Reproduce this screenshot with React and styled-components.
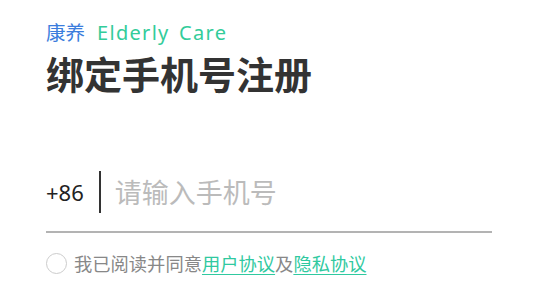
import styled, { createGlobalStyle } from 'styled-components';

const GlobalStyle = createGlobalStyle`
  body {
    margin: 0;
    background: #fff;
    font-family: "Noto Sans", "Noto Sans CJK SC", sans-serif;
  }
`

function App() {
  return (
    <>
      <GlobalStyle />
      <Page>
        <Brand>
          <BrandCn>康养</BrandCn>
          <BrandEn>Elderly Care</BrandEn>
        </Brand>
        <Title>绑定手机号注册</Title>
        <PhoneRow>
          <AreaCode>+86</AreaCode>
          <Divider />
          <PhoneInput placeholder="请输入手机号" />
        </PhoneRow>
        <Agreement>
          <Radio />
          <span>我已阅读并同意</span>
          <AgreeLink>用户协议</AgreeLink>
          <span>及</span>
          <AgreeLink>隐私协议</AgreeLink>
        </Agreement>
      </Page>
    </>
  )
}

const Page = styled.div`
  display: flex;
  flex-direction: column;
  padding: 0 45px 0 46px;
`

const Brand = styled.div`
  display: flex;
  align-items: baseline;
  gap: 12px;
  margin-top: 19px;
  line-height: 27px;
`

const BrandCn = styled.span`
  font-size: 19.5px;
  color: #3b7ddd;
`

const BrandEn = styled.span`
  font-size: 20px;
  color: #33cc9a;
  letter-spacing: 1.3px;
  word-spacing: 3px;
`

const Title = styled.h1`
  margin: 2px 0 0;
  font-size: 38px;
  line-height: 52px;
  font-weight: 700;
  color: #333;
`

const PhoneRow = styled.div`
  display: flex;
  align-items: center;
  margin-top: 71px;
  padding-bottom: 18px;
  border-bottom: 2px solid #b3b3b3;
`

const AreaCode = styled.span`
  font-size: 22px;
  color: #222;
`

const Divider = styled.div`
  flex-shrink: 0;
  width: 2px;
  height: 42px;
  background: #333;
  margin: 0 14px 0 15px;
`

const PhoneInput = styled.input`
  flex: 1;
  min-width: 0;
  border: none;
  outline: none;
  padding: 0;
  font-family: inherit;
  font-size: 27px;
  color: #333;
  background: transparent;

  &::placeholder {
    color: #bbb;
  }
`

const Agreement = styled.div`
  display: flex;
  align-items: center;
  margin-top: 17px;
  font-size: 18.3px;
  color: #888;
`

const Radio = styled.div`
  width: 19px;
  height: 19px;
  border: 1.5px solid #ccc;
  border-radius: 50%;
  margin-right: 7px;
`

const AgreeLink = styled.a`
  color: #30c9a0;
  text-decoration: underline;
  text-underline-offset: 3px;
  cursor: pointer;
`

export default App;
